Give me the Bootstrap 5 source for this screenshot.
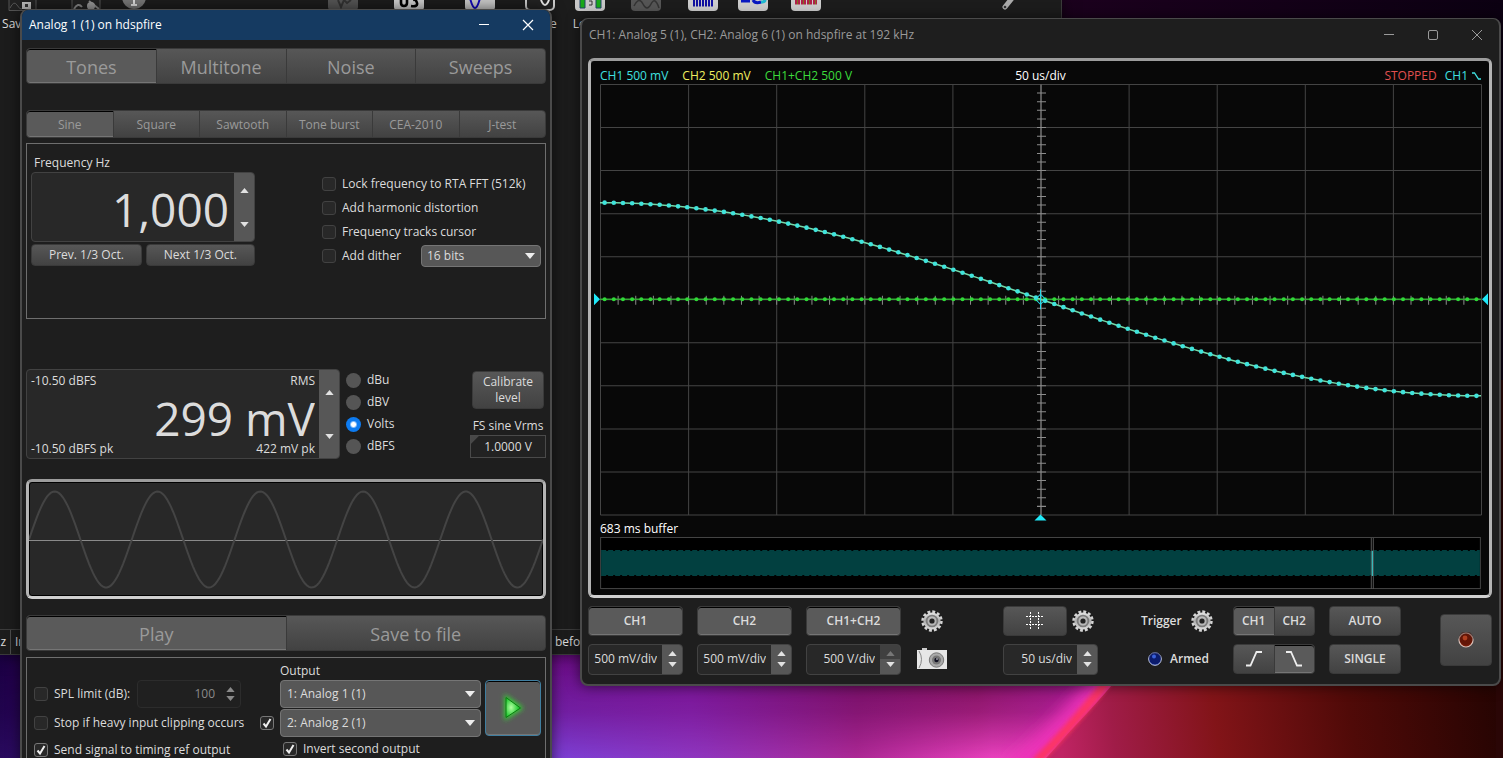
<!DOCTYPE html>
<html lang="en" data-bs-theme="dark">
<head>
<meta charset="utf-8">
<meta name="viewport" content="width=device-width, initial-scale=1">
<title>Analog 1 (1) on hdspfire</title>
<link href="https://cdn.jsdelivr.net/npm/bootstrap@5.3.0/dist/css/bootstrap.min.css" rel="stylesheet">
<style>
  :root { --ink:#dcdcdc; --dim:#9a9a9a; --panel:#1e1e1e; --field:#282828; --line:#424242; --raised:linear-gradient(#575757,#424242); }
  body { font-family:"Open Sans","Noto Sans",sans-serif; font-size:12px; line-height:16px; color:var(--ink); background:#14001f; }
  .desktop { height:100vh; overflow:hidden; }
  .wallpaper { position:absolute; inset:0; width:100%; height:100%; }

  /* windows on the desktop */
  .win { position:absolute; background:var(--panel); border:1px solid #4a4a4a; border-radius:8px; box-shadow:0 0 14px rgba(0,0,0,.6); }
  .win-main { left:0; top:0; width:1062px; height:655px; border-width:0 1px 1px 0; border-color:#3a3a3a; border-radius:0; background:#1c1c1c; overflow:hidden; }
  .win-gen { left:20px; top:9px; width:532px; border-width:1px 2px; overflow:hidden; }
  .win-scope { left:580px; right:2px; top:18px; border-width:1px 2px 2px; padding:0 7px 9px 6px; }
  .title-gen { height:30px; background:#153a61; color:#fff; padding:0 0 0 7px; }
  .title-scope { height:31px; color:var(--dim); padding:0 0 0 1px; margin-right:-7px; }
  .cap-btn { background:none; border:0; padding:0; width:44px; height:28px; color:inherit; display:flex; align-items:center; justify-content:center; }

  /* toolbar and status bar of the main window */
  .tool { flex:none; text-align:center; }
  .tool svg { display:block; margin:0 auto 5px; height:11px; width:32px; }
  .status { height:25px; border-top:1px solid #3c3c3c; }

  /* buttons */
  .btn { --bs-btn-font-size:12px; --bs-btn-line-height:16px; --bs-btn-padding-x:0; --bs-btn-padding-y:0; --bs-btn-border-radius:4px; --bs-btn-color:var(--ink); --bs-btn-border-color:#3a3a3a; --bs-btn-active-color:var(--ink); --bs-btn-active-bg:#5a5a5a; --bs-btn-active-border-color:#3a3a3a; --bs-btn-hover-color:#fff; background:var(--raised); }
  .btn.active { background:#5a5a5a; box-shadow:inset 0 1px #000, inset 0 -1px #757575; }
  .tabs .btn { --bs-btn-color:var(--dim); --bs-btn-active-color:var(--dim); flex:1 1 0; padding-top:2px; }
  .tabs-lg .btn { font-size:18px; line-height:24px; height:36px; }
  .tabs-sm .btn { height:28px; }
  .bold-btn { font-weight:600; height:30px; }
  .w-ch { width:95px; } .w-trig { width:82px; } .w-auto2 { width:72px; }

  .frame { border:1px solid #6e6e6e; }
  .bezel { border:3px solid #b4b4b4; border-radius:6px; border-top-color:#9c9c9c; border-bottom-color:#d0d0d0; overflow:hidden; }

  /* spin boxes */
  .spin { display:flex; border:1px solid var(--line); border-radius:4px; background:var(--field); overflow:hidden; }
  .spin input { min-width:0; flex:1; background:none; border:0; color:var(--ink); text-align:right; padding:0 5px 0 0; outline:0; }
  .spin-arrows { flex:none; width:20px; display:flex; flex-direction:column; background:#575757; }
  .spin-arrows button { flex:1; border:0; padding:3px 0; background:none; display:flex; justify-content:center; align-items:center; color:#e2e2e2; }
  .spin-arrows button:first-child { align-items:flex-end; }
  .spin-arrows button:last-child { align-items:flex-start; }
  .spin-arrows svg { width:9px; height:5px; display:block; fill:currentColor; }
  .spin-big .spin-arrows button { align-items:center; }
  .spin-big input { font-size:46px; line-height:56px; padding-top:4px; }
  .spin-sm { height:31px; }
  .spin-arrows button.off { background:#404040; color:#777; }
  .spin-spl { width:104px; height:28px; border-color:#2c2c2c; background:#202020; }
  .spin-spl input, .spin-spl .spin-arrows button { color:#8a8a8a; }
  .spin-spl .spin-arrows { background:none; }
  .spin-spl .spin-arrows button { padding:2px 0; }

  /* choices */
  .form-check { display:flex; align-items:center; gap:6px; padding:0; margin:0; min-height:0; height:24px; }
  .form-check .form-check-input { float:none; margin:0; flex:none; }
  .form-check-input { width:14px; height:14px; background-color:#282828; border:1px solid #424242; }
  .form-check-input[type=checkbox] { border-radius:3px; }
  .form-check-input[type=checkbox]:checked { background-color:#282828; border-color:#777; background-size:12px 12px; background-image:url("data:image/svg+xml,%3Csvg xmlns='http://www.w3.org/2000/svg' viewBox='0 0 12 12'%3E%3Cpath d='M2.5 6.5 5 9.500 9.500 2' fill='none' stroke='%23eee' stroke-width='2'/%3E%3C/svg%3E"); }
  .form-check-input[type=radio] { width:15px; height:15px; background-color:#555; border:0; }
  .form-check-input[type=radio]:checked { background-color:#0d7bf0; background-image:radial-gradient(circle,#fff 0 2px,transparent 4px); }
  .radios .form-check { height:22px; }
  .form-select { font-size:12px; line-height:16px; color:var(--ink); border:1px solid #757575; border-radius:4px; background-color:#575757; padding:0 24px 0 5px; background-position:right 5px center; background-size:10px 6px; background-image:url("data:image/svg+xml,%3Csvg xmlns='http://www.w3.org/2000/svg' viewBox='0 0 10 6'%3E%3Cpath d='M0 0h10L5 6z' fill='%23eee'/%3E%3C/svg%3E"); }
  .sel-sm { width:120px; height:22px; }
  .sel-out { width:201px; height:28px; padding-left:6px; }

  .freq-box { height:176px; padding:11px 4px 0; }
  .w-freq { width:224px; }
  .choices { padding:17px 0 0; }
  .level-box { width:314px; height:90px; }
  .level-read { flex:1; min-width:0; padding:3px 4px 1px; }
  .level-read input { height:50px; width:100%; padding:5px 0 0; flex:none; }
  .cal-btn { width:72px; height:38px; }
  .fs-field { width:76px; height:23px; text-align:center; color:var(--ink); border:1px solid #4a4a4a; background:linear-gradient(135deg,#484848 0 5px,#222 6px); padding:0; }
  .sine-view { background:#282828; box-shadow:inset 0 0 0 1px #000; }
  .sine-view svg { display:block; width:100%; height:114px; }
  .out-box { height:150px; padding:5px 4px 0 7px; }
  .play-btn { width:56px; height:56px; border-color:#3f7ea0 !important; }

  .scope-view { background:#080808; padding:7px 8px 4px 9px; }
  .scope-view svg { display:block; width:100%; height:auto; overflow:visible; }
  .buffer-label { padding-top:3px; }
  .c-1 { color:#3fe0e0; } .c-2 { color:#f0f060; } .c-3 { color:#3cdc3c; } .c-stop { color:#e05050; }
  .icon-btn { border:0; background:none; padding:0; height:30px; display:flex; align-items:center; justify-content:center; }
  .trig-lab { width:72px; height:30px; font-weight:600; }
  .rec-btn { width:52px; height:52px; }
</style>
</head>
<body>
<svg width="0" height="0" class="position-absolute" aria-hidden="true">
  <defs>
    <linearGradient id="metal" x1="0" y1="0" x2="0" y2="1"><stop offset="0" stop-color="#e4e4e4"/><stop offset=".5" stop-color="#b0b0b0"/><stop offset="1" stop-color="#dadada"/></linearGradient>
    <symbol id="up" viewBox="0 0 10 6"><path d="M0 6 5 0l5 6z"/></symbol>
    <symbol id="down" viewBox="0 0 10 6"><path d="M0 0h10L5 6z"/></symbol>
    <symbol id="gear" viewBox="-11 -11 22 22">
      <circle r="9" fill="none" stroke="#d4d4d4" stroke-width="3.4" stroke-dasharray="2.8 1.912"/>
      <circle r="8.600" fill="url(#metal)"/><circle r="5.400" fill="none" stroke="#7c7c7c" stroke-width="1.800"/><circle r="3.800" fill="#b4b4b4"/><circle r="2.600" fill="#222"/>
    </symbol>
  </defs>
</svg>

<div class="desktop position-relative">
  <svg class="wallpaper" viewBox="0 0 1503 758" preserveAspectRatio="none" aria-hidden="true">
    <defs>
      <linearGradient id="sky"><stop offset="0" stop-color="#1c0044"/><stop offset=".015" stop-color="#24004c"/><stop offset=".36" stop-color="#6a0d86"/><stop offset=".46" stop-color="#761090"/><stop offset=".57" stop-color="#700c62"/><stop offset=".65" stop-color="#740a54"/><stop offset=".72" stop-color="#8a1080"/></linearGradient>
      <linearGradient id="glow"><stop offset="0" stop-color="#2a0a60"/><stop offset=".36" stop-color="#7a44dc"/><stop offset=".47" stop-color="#9238c0"/><stop offset=".57" stop-color="#b02a98"/><stop offset=".66" stop-color="#f044c4"/><stop offset=".75" stop-color="#ff3cc0"/></linearGradient>
      <linearGradient id="fade" x1="0" y1="0" x2="0" y2="1"><stop offset=".87" stop-color="#000"/><stop offset=".94" stop-color="#555"/><stop offset="1" stop-color="#eee"/></linearGradient>
      <mask id="low"><rect width="1503" height="758" fill="url(#fade)"/></mask>
      <linearGradient id="ember" gradientUnits="userSpaceOnUse" x1="1060" y1="740" x2="1503" y2="680"><stop offset="0" stop-color="#c02464"/><stop offset=".12" stop-color="#a01c48"/><stop offset=".35" stop-color="#821418"/><stop offset=".65" stop-color="#500a08"/><stop offset="1" stop-color="#240402"/></linearGradient>
      <linearGradient id="night"><stop offset=".7" stop-color="#1c001e"/><stop offset="1" stop-color="#0c0012"/></linearGradient>
      <filter id="soft"><feGaussianBlur stdDeviation="8"/></filter>
      <filter id="edge"><feGaussianBlur stdDeviation="2"/></filter>
      <clipPath id="leftOf"><path d="M0 0H1180V600Q1100 706 1042 758H0z"/></clipPath>
    </defs>
    <rect width="1503" height="758" fill="url(#sky)"/>
    <rect width="1503" height="758" fill="url(#glow)" mask="url(#low)"/>
    <path d="M1180 590Q1100 700 1046 758H1503V590z" fill="url(#ember)"/>
    <g clip-path="url(#leftOf)"><path d="M1140 640Q1076 720 1014 775" fill="none" stroke="#ec30b8" stroke-width="26" filter="url(#soft)"/></g>
    <path d="M1160 610Q1098 700 1036 762" fill="none" stroke="#ff3458" stroke-width="9" opacity=".85" filter="url(#edge)"/>
    <rect width="1503" height="400" fill="url(#night)"/>
    <path d="M1496 380h7v378h-7z" fill="#2a0606"/>
  </svg>

  <!-- main application window -->
  <div class="win win-main d-flex flex-column justify-content-between">
    <div class="d-flex" style="margin-left:-10px">
      <div class="tool" style="width:66px"><svg viewBox="0 0 32 11"><path d="M2 0v10.500h27V0" fill="#222" stroke="#555"/><path d="M3 8q4-8 7-3t5 4" fill="none" stroke="#555"/><rect x="15" y="2" width="9" height="7" fill="#bbb"/><rect x="18" y="4" width="3" height="3" fill="#333"/></svg>Save all</div>
      <div class="tool" style="width:60px"><svg viewBox="0 0 32 11"><path d="M2 0v10.500h28V0" fill="#222" stroke="#555"/><path d="M4 9q4-7 8-2M19 1l10 8" fill="none" stroke="#888" stroke-width="2"/><circle cx="21" cy="6" r="4" fill="#999"/></svg></div>
      <div class="tool" style="width:36px"><svg viewBox="0 0 32 11"><circle cx="16" cy="-3" r="12" fill="#777"/><path d="M16 0v5m-3 0h6" stroke="#ddd" stroke-width="2"/></svg></div>
      <div class="tool ms-auto" style="width:66px"><svg viewBox="0 0 32 11"><rect x="1" y="-9" width="30" height="19" rx="3" fill="#555"/><path d="M11 0l3 7 3-7 3 3 4-3" fill="none" stroke="#333" stroke-width="2"/></svg></div>
      <div class="tool" style="width:66px"><svg viewBox="0 0 32 11"><rect x="1" y="-9" width="30" height="19" rx="3" fill="#ccc"/><path d="M8 0v3q0 3 3 3t3-3V0M18 6q7 1 6-3t-4-3" fill="none" stroke="#000" stroke-width="2.600"/></svg></div>
      <div class="tool" style="width:76px"><svg viewBox="0 0 32 11"><rect x="1" y="-9" width="30" height="19" rx="3" fill="#c8c8c8"/><path d="M6-2q5 20 10 0" fill="none" stroke="#1208b8" stroke-width="2"/></svg></div>
      <div class="tool" style="width:44px"><svg viewBox="0 0 32 11"><rect x="2" y="-9" width="28" height="19" rx="4" fill="#222" stroke="#ccc" stroke-width="2"/><path d="M17 0q4 10 8 0" fill="none" stroke="#eee" stroke-width="2"/></svg>Scope</div>
      <div class="tool" style="width:56px"><svg viewBox="0 0 32 11"><rect x="1" y="-9" width="30" height="20" rx="4" fill="#c8c8c8"/><path d="M6-1v9h5v-9M22-1v9h5v-9" fill="#18a818" stroke="#246"/><path d="M15 1h3v4h-3" fill="none" stroke="#333"/></svg>Levels</div>
      <div class="tool" style="width:56px"><svg viewBox="0 0 32 11"><rect x="1" y="-9" width="30" height="20" rx="4" fill="#555"/><path d="M4 6q5-10 9-2t8 0 8 4" fill="none" stroke="#333" stroke-width="1.500"/></svg></div>
      <div class="tool" style="width:58px"><svg viewBox="0 0 32 11"><rect x="1" y="-9" width="30" height="20" rx="4" fill="#ccc"/><path d="M6 3h21" stroke="#1010a0" stroke-width="7" stroke-dasharray="2 1"/></svg></div>
      <div class="tool" style="width:42px"><svg viewBox="0 0 32 11"><rect x="1" y="-9" width="30" height="20" rx="4" fill="#ccc"/><path d="M4 1h9M16 0q2 4 8 2" stroke="#0818c0" stroke-width="3" fill="none"/><path d="M24 2q4 0 4-2" stroke="#20b8d0" stroke-width="3"/></svg></div>
      <div class="tool" style="width:64px"><svg viewBox="0 0 32 11"><rect x="1" y="-9" width="30" height="20" rx="4" fill="#ccc"/><path d="M5 2h22" stroke="#b02048" stroke-width="5" stroke-dasharray="2 1"/><path d="M7 2h20" stroke="#807020" stroke-width="5" stroke-dasharray="1 5"/></svg></div>
      <div class="tool" style="width:70px; margin:0 17px 0 136px"><svg viewBox="0 0 32 11"><path d="M20-3 12 7" stroke="#aaa" stroke-width="5" stroke-linecap="round"/><circle cx="12" cy="7" r="1.300" fill="#333"/></svg></div>
    </div>
    <div class="status d-flex align-items-center">
      <span class="text-end" style="width:6px">z</span>
      <span class="vr mx-1"></span><span style="width:540px">In</span><span>before</span>
    </div>
  </div>

  <!-- oscilloscope window -->
  <section class="win win-scope">
    <header class="title-scope d-flex align-items-center justify-content-between">
      <span>CH1: Analog 5 (1), CH2: Analog 6 (1) on hdspfire at 192 kHz</span>
      <span class="d-flex">
        <button class="cap-btn" aria-label="Minimize"><svg width="12" height="12"><path d="M1 5.500h10" stroke="currentColor"/></svg></button>
        <button class="cap-btn" aria-label="Maximize"><svg width="12" height="12"><rect x="1.500" y="1.500" width="9" height="9" rx="1.500" fill="none" stroke="currentColor"/></svg></button>
        <button class="cap-btn" aria-label="Close"><svg width="12" height="12"><path d="M1 1l10 10M11 1 1 11" stroke="currentColor"/></svg></button>
      </span>
    </header>
    <div class="bezel scope-view mt-2 mb-2">
      <div class="row g-0 text-nowrap">
        <div class="col d-flex" style="gap:14px"><span class="c-1">CH1 500 mV</span><span class="c-2">CH2 500 mV</span><span class="c-3">CH1+CH2 500 V</span></div>
        <div class="col-auto text-white">50 us/div</div>
        <div class="col d-flex justify-content-end gap-2"><span class="c-stop">STOPPED</span><span class="c-1 d-flex align-items-center gap-1">CH1 <svg style="width:9px;height:8px" viewBox="0 0 9 8"><path d="M0 1h2.500l4 6H9" fill="none" stroke="#3fe0e0" stroke-width="1.300"/></svg></span></div>
      </div>
      <svg id="plot" viewBox="0 0 880 430" class="mb-1 mt-0" role="img" aria-label="Waveform"></svg>
      <div class="text-white buffer-label">683 ms buffer</div>
      <svg viewBox="0 0 880 53" role="img" aria-label="Capture buffer">
        <rect x=".5" y=".5" width="879" height="51" fill="#000" stroke="#444"/>
        <rect x="1" y="14" width="878" height="24" fill="#024040"/>
        <path d="M1 13.500h878M1 38.500h878" stroke="#024040" stroke-dasharray="5 2"/>
        <path d="M770.500 1v51M772.500 1v51" stroke="#555"/><path d="M771.500 14v25" stroke="#40d8d8"/>
      </svg>
    </div>

    <div class="d-flex align-items-start">
      <div class="d-flex" style="gap:14px">
        <div class="w-ch d-flex flex-column gap-2"><button class="btn bold-btn active">CH1</button><div class="spin spin-sm"><input value="500 mV/div" aria-label="CH1 scale"><span class="spin-arrows"><button aria-label="Up"><svg><use href="#up"/></svg></button><button aria-label="Down"><svg><use href="#down"/></svg></button></span></div></div>
        <div class="w-ch d-flex flex-column gap-2"><button class="btn bold-btn active">CH2</button><div class="spin spin-sm"><input value="500 mV/div" aria-label="CH2 scale"><span class="spin-arrows"><button aria-label="Up"><svg><use href="#up"/></svg></button><button aria-label="Down"><svg><use href="#down"/></svg></button></span></div></div>
        <div class="w-ch d-flex flex-column gap-2"><button class="btn bold-btn active">CH1+CH2</button><div class="spin spin-sm"><input value="500 V/div" aria-label="Sum scale"><span class="spin-arrows"><button class="off" aria-label="Up"><svg><use href="#up"/></svg></button><button aria-label="Down"><svg><use href="#down"/></svg></button></span></div></div>
      </div>
      <div class="d-flex flex-column gap-2 ms-3">
        <button class="icon-btn" aria-label="Trace settings"><svg width="22" height="22"><use href="#gear"/></svg></button>
        <button class="icon-btn" aria-label="Capture image"><svg width="30" height="22" viewBox="0 0 30 22"><path d="M5 0h5v3H5z" fill="#ccc"/><rect y="2" width="30" height="19" fill="#e6e6e6"/><path d="M2 3q5 8 0 17" fill="none" stroke="#888"/><circle cx="19.500" cy="12" r="7.200" fill="#aaa" stroke="#777"/><circle cx="19.500" cy="12" r="4.500" fill="#777"/><circle cx="19.500" cy="12" r="2.200" fill="#112"/><circle cx="20" cy="11" r=".8" fill="#fff"/></svg></button>
      </div>
      <div class="w-ch d-flex flex-column gap-2" style="margin-left:56px">
        <div class="d-flex justify-content-between">
          <button class="btn bold-btn" style="width:64px" aria-label="Grid"><svg width="18" height="18" viewBox="0 0 18 18"><path d="M4.500 0v18M12.500 0v18M0 4.500h18M0 12.500h18" stroke="#fff" stroke-dasharray="2 1" fill="none"/></svg></button>
          <button class="icon-btn me-1" aria-label="Grid settings"><svg width="22" height="22"><use href="#gear"/></svg></button>
        </div>
        <div class="spin spin-sm"><input value="50 us/div" aria-label="Time base"><span class="spin-arrows"><button aria-label="Up"><svg><use href="#up"/></svg></button><button aria-label="Down"><svg><use href="#down"/></svg></button></span></div>
      </div>
      <div class="d-flex flex-column gap-2" style="margin-left:43px">
        <div class="trig-lab d-flex align-items-center justify-content-between"><span>Trigger</span><button class="icon-btn" aria-label="Trigger settings"><svg width="22" height="22"><use href="#gear"/></svg></button></div>
        <div class="trig-lab d-flex align-items-center justify-content-end gap-2 pe-1"><svg width="14" height="14" viewBox="0 0 14 14"><circle cx="7" cy="7" r="6.300" fill="#0c2488" stroke="#c8d0e8"/><circle cx="7" cy="6" r="6" fill="#0a1250" opacity=".5"/><circle cx="6" cy="4.500" r="2" fill="#3a60d8"/></svg><span>Armed</span></div>
      </div>
      <div class="w-trig d-flex flex-column gap-2" style="margin-left:20px">
        <div class="btn-group"><button class="btn bold-btn active">CH1</button><button class="btn bold-btn">CH2</button></div>
        <div class="btn-group"><button class="btn bold-btn" aria-label="Rising edge"><svg width="18" height="18" viewBox="0 0 18 18"><path d="M1 15.500h4.500l6-13.500H17" fill="none" stroke="#eee" stroke-width="1.800"/></svg></button><button class="btn bold-btn active" aria-label="Falling edge"><svg width="18" height="18" viewBox="0 0 18 18"><path d="M1 2h5l6 13.500h5" fill="none" stroke="#eee" stroke-width="1.800"/></svg></button></div>
      </div>
      <div class="w-auto2 d-flex flex-column gap-2" style="margin-left:14px"><button class="btn bold-btn">AUTO</button><button class="btn bold-btn">SINGLE</button></div>
      <button class="btn rec-btn ms-auto mt-2" aria-label="Record"><svg width="16" height="16" viewBox="0 0 16 16"><circle cx="8" cy="8" r="7" fill="#7a1c08" stroke="#d8c0b8" stroke-width="1.200"/><circle cx="8" cy="6" r="7" fill="#401008" opacity=".4"/><circle cx="7" cy="6" r="2.400" fill="#b04020"/></svg></button>
    </div>
  </section>

  <!-- signal generator window -->
  <section class="win win-gen">
    <header class="title-gen d-flex align-items-center justify-content-between">
      <span>Analog 1 (1) on hdspfire</span>
      <span class="d-flex">
        <button class="cap-btn" aria-label="Minimize"><svg width="12" height="12"><path d="M1 5.500h10" stroke="currentColor"/></svg></button>
        <button class="cap-btn" aria-label="Close"><svg width="12" height="12"><path d="M1 1l10 10M11 1 1 11" stroke="currentColor" stroke-width="1.200"/></svg></button>
      </span>
    </header>
    <div class="px-1 pt-2">
      <div class="btn-group tabs tabs-lg d-flex"><button class="btn active">Tones</button><button class="btn">Multitone</button><button class="btn">Noise</button><button class="btn">Sweeps</button></div>
      <div class="btn-group tabs tabs-sm d-flex" style="margin-top:26px"><button class="btn active">Sine</button><button class="btn">Square</button><button class="btn">Sawtooth</button><button class="btn">Tone burst</button><button class="btn">CEA-2010</button><button class="btn">J-test</button></div>

      <div class="frame freq-box d-flex justify-content-between" style="margin-top:5px">
        <div class="w-freq">
          <label for="freq" class="d-block" style="margin-left:3px">Frequency Hz</label>
          <div class="spin spin-big" style="height:70px; margin:1px 0 2px"><input id="freq" value="1,000"><span class="spin-arrows"><button aria-label="Up"><svg><use href="#up"/></svg></button><button aria-label="Down"><svg><use href="#down"/></svg></button></span></div>
          <div class="d-flex gap-1"><button class="btn flex-fill" style="height:22px">Prev. 1/3 Oct.</button><button class="btn flex-fill" style="height:22px">Next 1/3 Oct.</button></div>
        </div>
        <div class="choices">
          <div class="form-check"><input class="form-check-input" type="checkbox" id="lock"><label for="lock">Lock frequency to RTA FFT (512k)</label></div>
          <div class="form-check"><input class="form-check-input" type="checkbox" id="thd"><label for="thd">Add harmonic distortion</label></div>
          <div class="form-check"><input class="form-check-input" type="checkbox" id="track"><label for="track">Frequency tracks cursor</label></div>
          <div class="d-flex align-items-center justify-content-between" style="width:219px"><div class="form-check"><input class="form-check-input" type="checkbox" id="dith"><label for="dith">Add dither</label></div><select class="form-select sel-sm" aria-label="Dither bits"><option>16 bits</option></select></div>
        </div>
      </div>

      <div class="d-flex" style="margin-top:50px">
        <div class="spin spin-big level-box">
          <div class="level-read d-flex flex-column justify-content-between">
            <div class="d-flex justify-content-between"><span>-10.50 dBFS</span><span>RMS</span></div>
            <input value="299 mV" aria-label="Level">
            <div class="d-flex justify-content-between"><span>-10.50 dBFS pk</span><span>422 mV pk</span></div>
          </div>
          <span class="spin-arrows"><button aria-label="Up"><svg><use href="#up"/></svg></button><button aria-label="Down"><svg><use href="#down"/></svg></button></span>
        </div>
        <div class="radios" style="margin-left:6px">
          <div class="form-check"><input class="form-check-input" type="radio" name="unit" id="u1"><label for="u1">dBu</label></div>
          <div class="form-check"><input class="form-check-input" type="radio" name="unit" id="u2"><label for="u2">dBV</label></div>
          <div class="form-check"><input class="form-check-input" type="radio" name="unit" id="u3" checked><label for="u3">Volts</label></div>
          <div class="form-check"><input class="form-check-input" type="radio" name="unit" id="u4"><label for="u4">dBFS</label></div>
        </div>
        <div class="ms-auto d-flex flex-column align-items-center" style="padding-top:2px">
          <button class="btn cal-btn">Calibrate<br>level</button>
          <label for="fs" style="margin-top:9px; margin-bottom:1px">FS sine Vrms</label>
          <input id="fs" class="fs-field" value="1.0000 V">
        </div>
      </div>

      <div class="bezel sine-view" style="margin-top:20px"><svg id="sine" viewBox="0 0 514 114" preserveAspectRatio="none" role="img" aria-label="Sine preview"></svg></div>

      <div class="btn-group tabs tabs-lg d-flex mt-3"><button class="btn active">Play</button><button class="btn">Save to file</button></div>

      <div class="frame out-box d-flex" style="margin-top:6px">
        <div style="padding-top:17px">
          <div class="d-flex align-items-center justify-content-between" style="width:207px; height:28px"><div class="form-check"><input class="form-check-input" type="checkbox" id="spl"><label for="spl">SPL limit (dB):</label></div>
            <div class="spin spin-spl"><input value="100" disabled aria-label="SPL limit"><span class="spin-arrows"><button disabled aria-label="Up"><svg><use href="#up"/></svg></button><button disabled aria-label="Down"><svg><use href="#down"/></svg></button></span></div></div>
          <div class="form-check" style="height:30px"><input class="form-check-input" type="checkbox" id="clip"><label for="clip">Stop if heavy input clipping occurs</label></div>
          <div class="form-check"><input class="form-check-input" type="checkbox" id="ref" checked><label for="ref">Send signal to timing ref output</label></div>
        </div>
        <div class="ms-auto">
          <label for="o1" class="d-block" style="margin:0 0 1px 20px">Output</label>
          <div class="d-flex gap-1">
            <div>
              <div class="d-flex justify-content-end"><select id="o1" class="form-select sel-out"><option>1: Analog 1 (1)</option></select></div>
              <div class="d-flex align-items-center" style="margin-top:1px"><input class="form-check-input" style="margin:0 6px 0 0" type="checkbox" checked aria-label="Use second output"><select class="form-select sel-out" aria-label="Second output"><option>2: Analog 2 (1)</option></select></div>
            </div>
            <button class="btn play-btn active" aria-label="Play"><svg width="32" height="36" viewBox="0 0 32 36"><defs><radialGradient id="pg" cx=".35"><stop offset="0" stop-color="#b0ffa0"/><stop offset="1" stop-color="#20c830"/></radialGradient><filter id="halo" x="-.5" y="-.5" width="2" height="2"><feGaussianBlur stdDeviation="2.500"/></filter></defs><path d="M9 7v21l15-10z" fill="#40e040" stroke="#30d030" stroke-width="3" filter="url(#halo)"/><path d="M9 7.500v20L23.500 18z" fill="url(#pg)" stroke="#0a7a10"/></svg></button>
          </div>
          <div class="form-check" style="margin-left:23px"><input class="form-check-input" type="checkbox" id="inv" checked><label for="inv">Invert second output</label></div>
        </div>
      </div>
    </div>
  </section>
</div>

<script src="https://cdn.jsdelivr.net/npm/bootstrap@5.3.0/dist/js/bootstrap.bundle.min.js"></script>
<script>
  // oscilloscope trace: half a period of a 1 kHz cosine, 96 samples
  const y = x => 215 - 96.5 * Math.cos(Math.PI * x / 880);
  let grid = '', ticks = '', line = '', c1 = '', c3 = '';
  for (let i = 0; i <= 10; i++) grid += `M${i * 88} 0V430M0 ${i * 43}H880`;
  for (let i = 1; i < 50; i++) {
    ticks += `M${i * 17.6} 211v9M436 ${i * 8.6}h9`;
  }
  for (let x = 0; x <= 880; x += 8) line += (x ? 'L' : 'M') + x + ' ' + y(x).toFixed(2);
  for (let k = 0; k < 96; k++) {
    const x = 4.6 + k * 9.167;
    c1 += `<circle cx="${x}" cy="${y(x)}" r="2.3"/>`;
    c3 += `<circle cx="${x}" cy="215" r="2"/>`;
  }
  document.getElementById('plot').innerHTML = `
    <path d="${grid}" stroke="#444" fill="none" transform="translate(.5 .5)"/>
    <path d="${ticks}M440 0V430" stroke="#8c8c8c" fill="none" transform="translate(.5 .5)"/>
    <path d="M0 215H880" stroke="#34a834" stroke-width="1.4"/><g fill="#30d838">${c3}</g>
    <path d="${line}" stroke="#74d8a8" stroke-width="1.5" fill="none"/><g fill="#40e4dc">${c1}</g>
    <path d="M440 210l5 5-5 5-5-5z M440 205v20" stroke="#28d8e8" fill="none"/>
    <g fill="#20e8f8"><path d="M-6 209v12l6-6zM887 209v12l-6-6zM434 436h12l-6-6z"/></g>`;

  // generator preview: five sine cycles
  let s = '';
  for (let x = 0; x <= 514; x += 2) s += (x ? 'L' : 'M') + x + ' ' + (57.5 - 48 * Math.sin(x / 514 * 10 * Math.PI)).toFixed(2);
  document.getElementById('sine').innerHTML = `<path d="M0 58.5H514" stroke="#8a8a8a"/><path d="${s}" fill="none" stroke="#444" stroke-width="2"/>`;
</script>
</body>
</html>
